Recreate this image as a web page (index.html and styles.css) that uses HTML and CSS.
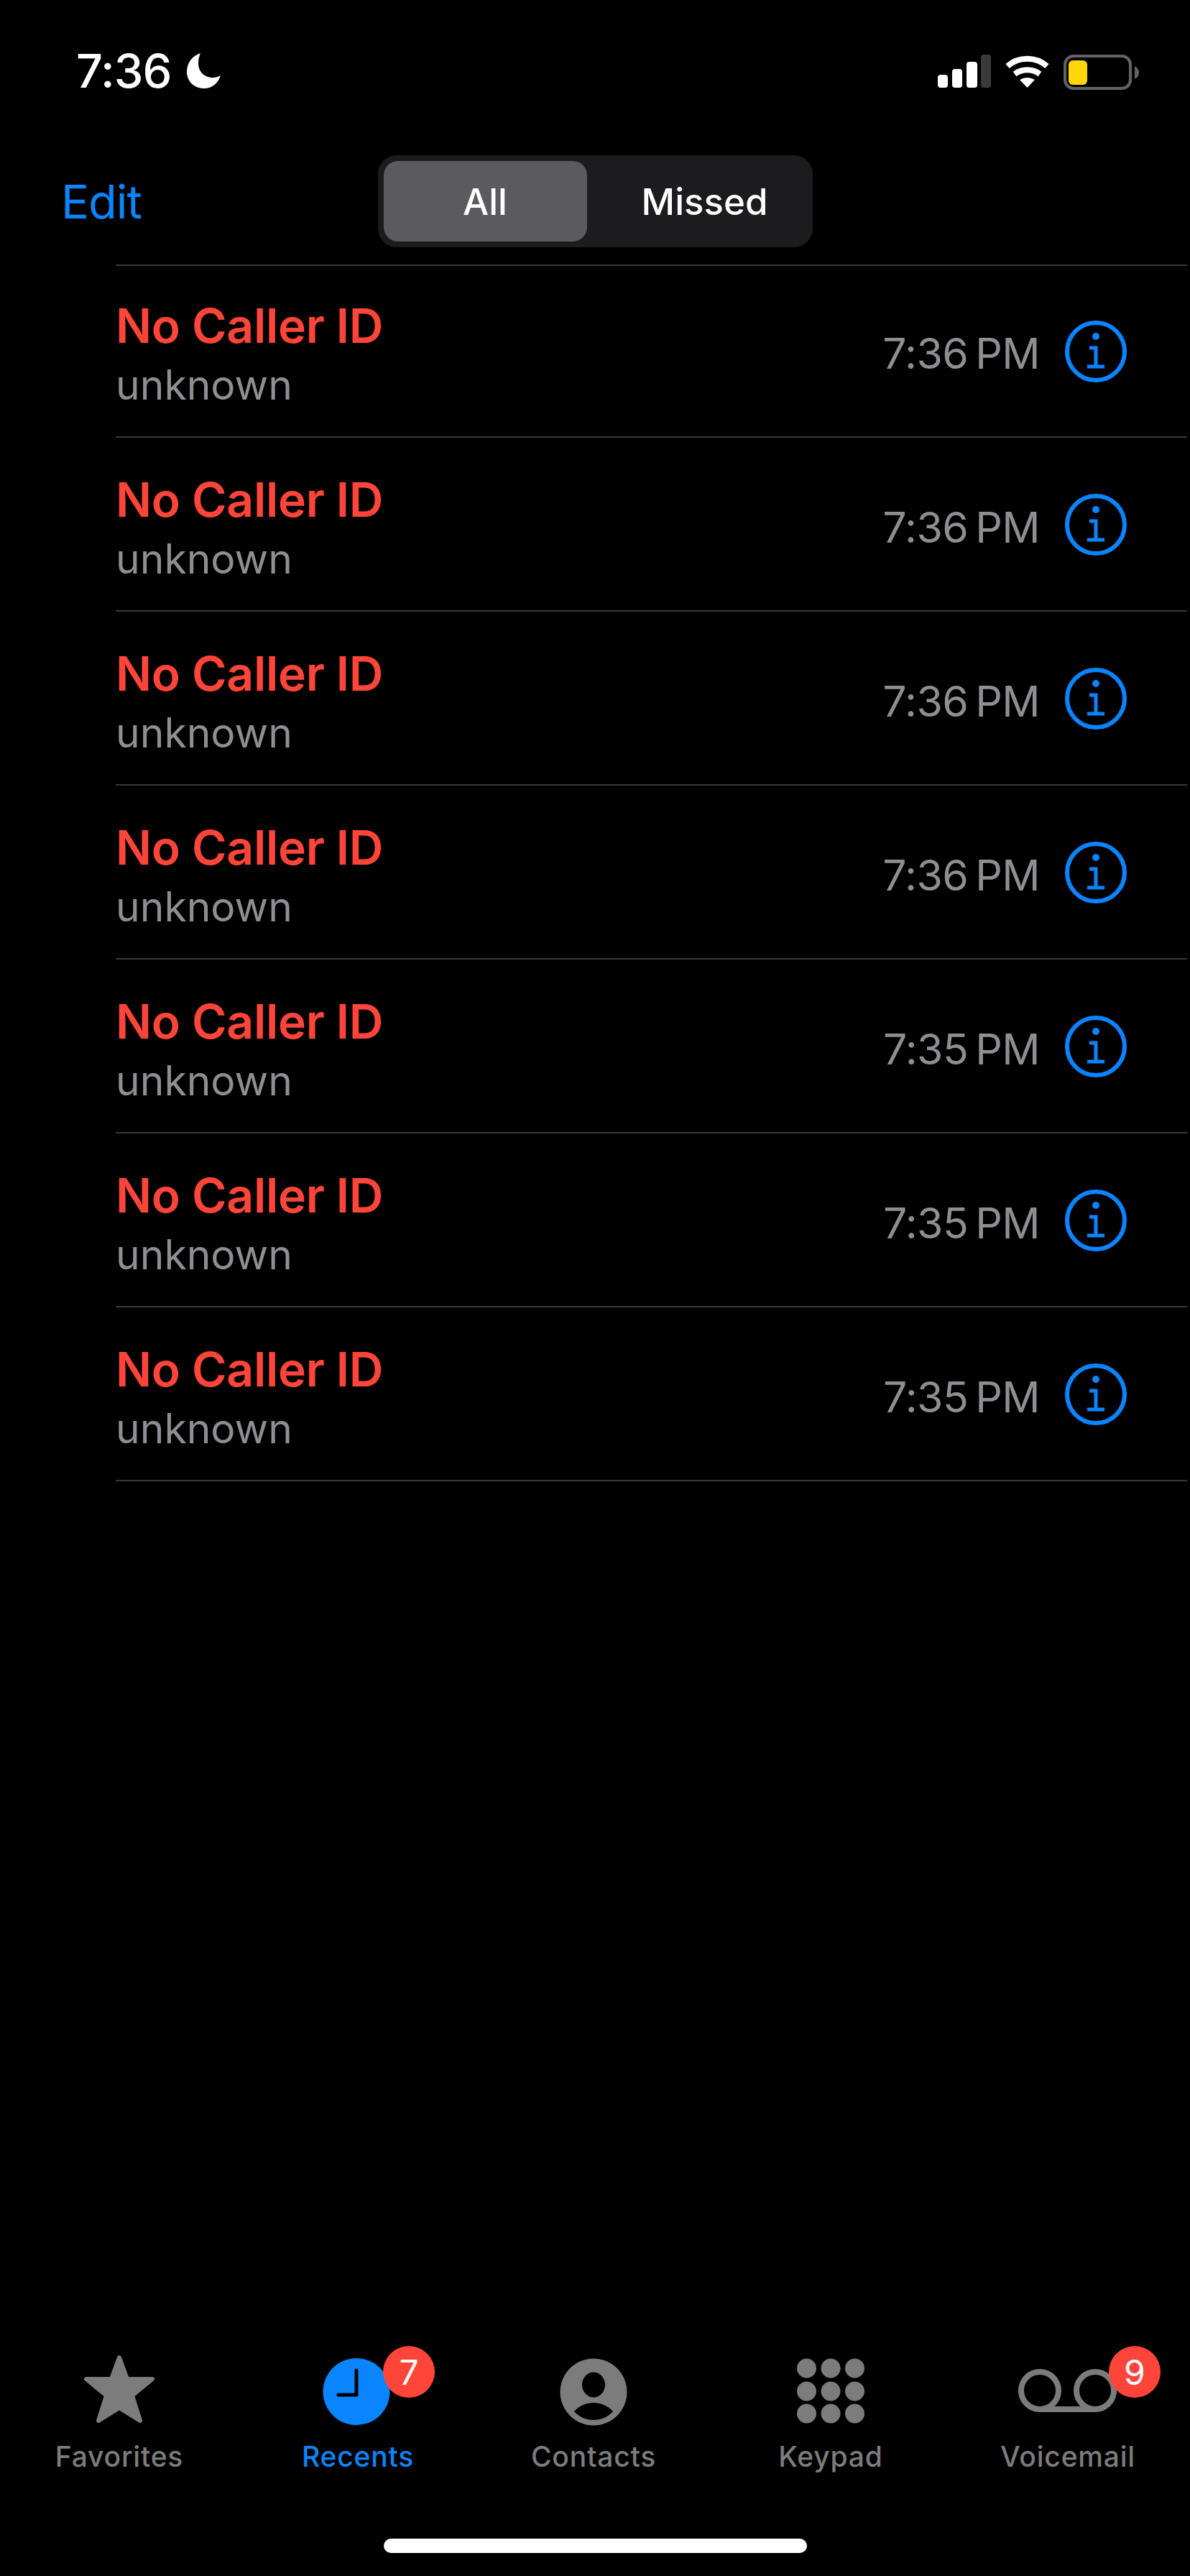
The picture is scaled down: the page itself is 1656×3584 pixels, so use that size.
FILE: index.html
```html
<!DOCTYPE html>
<html lang="en">
<head>
    <meta charset="UTF-8">
    <meta name="viewport" content="width=device-width, initial-scale=1.0">
    <title>Recents</title>
    <link rel="stylesheet" href="styles.css">
</head>
<body>
    <svg class="defs" width="0" height="0">
        <symbol id="info" viewBox="0 0 86 86">
            <circle cx="43" cy="43" r="40" fill="none" stroke="#0a84ff" stroke-width="6"/>
            <circle cx="43" cy="22" r="5" fill="#0a84ff"/>
            <path d="M34 38H43V64M31 64H55" fill="none" stroke="#0a84ff" stroke-width="5"/>
        </symbol>
    </svg>

    <div class="phone">
        <!-- status bar -->
        <div class="status">
            <div class="clock-group">
                <span class="clock">7:36</span>
                <svg class="moon" width="48" height="50" viewBox="0 0 48 50">
                    <path d="M19 0C7 4 0 14 0 26C0 39 10 49 24 49C34 49 43 43 47 31C44 33 40 34 36 34C24 34 16 25 16 14C16 9 17 4 19 0Z" fill="#fff"/>
                </svg>
            </div>
            <div class="status-icons">
                <svg width="74" height="47" viewBox="0 0 74 47">
                    <rect x="0" y="28" width="14" height="18" rx="4" fill="#fff"/>
                    <rect x="20" y="20" width="14" height="26" rx="4" fill="#fff"/>
                    <rect x="40" y="10" width="15" height="36" rx="4" fill="#fff"/>
                    <rect x="60" y="0" width="14" height="46" rx="4" fill="#3a3a3c"/>
                </svg>
                <svg width="63" height="47" viewBox="0 0 63 47">
                    <path d="M4 16A42 42 0 0 1 59 16" fill="none" stroke="#fff" stroke-width="8"/>
                    <path d="M14 27A30 30 0 0 1 49 27" fill="none" stroke="#fff" stroke-width="8"/>
                    <path d="M31.500 46L21 35Q31.500 29 42 35Z" fill="#fff"/>
                </svg>
                <svg width="106" height="50" viewBox="0 0 106 50">
                    <rect x="2" y="2" width="91" height="45" rx="12" fill="none" stroke="#636366" stroke-width="4"/>
                    <rect x="7" y="8" width="26" height="34" rx="6" fill="#ffd60a"/>
                    <path d="M99 16C103 18 105 21 105 25C105 29 103 32 99 34Z" fill="#636366"/>
                </svg>
            </div>
        </div>

        <!-- nav -->
        <div class="header">
            <a class="edit">Edit</a>
            <div class="segment">
                <div class="segment-on">All</div>
                <div class="segment-off">Missed</div>
            </div>
        </div>

        <!-- call list -->
        <div class="calls">
            <div class="call">
                <div class="who"><div class="name">No Caller ID</div><div class="sub">unknown</div></div>
                <div class="when">7:36 PM</div>
                <svg class="info" width="86" height="86"><use href="#info"/></svg>
            </div>
            <div class="call">
                <div class="who"><div class="name">No Caller ID</div><div class="sub">unknown</div></div>
                <div class="when">7:36 PM</div>
                <svg class="info" width="86" height="86"><use href="#info"/></svg>
            </div>
            <div class="call">
                <div class="who"><div class="name">No Caller ID</div><div class="sub">unknown</div></div>
                <div class="when">7:36 PM</div>
                <svg class="info" width="86" height="86"><use href="#info"/></svg>
            </div>
            <div class="call">
                <div class="who"><div class="name">No Caller ID</div><div class="sub">unknown</div></div>
                <div class="when">7:36 PM</div>
                <svg class="info" width="86" height="86"><use href="#info"/></svg>
            </div>
            <div class="call">
                <div class="who"><div class="name">No Caller ID</div><div class="sub">unknown</div></div>
                <div class="when">7:35 PM</div>
                <svg class="info" width="86" height="86"><use href="#info"/></svg>
            </div>
            <div class="call">
                <div class="who"><div class="name">No Caller ID</div><div class="sub">unknown</div></div>
                <div class="when">7:35 PM</div>
                <svg class="info" width="86" height="86"><use href="#info"/></svg>
            </div>
            <div class="call">
                <div class="who"><div class="name">No Caller ID</div><div class="sub">unknown</div></div>
                <div class="when">7:35 PM</div>
                <svg class="info" width="86" height="86"><use href="#info"/></svg>
            </div>
        </div>

        <!-- tab bar -->
        <div class="tabs">
            <div class="tab">
                <svg width="100" height="100" viewBox="0 0 100 100">
                    <polygon points="50,5 61,35 96,35 68,58 79,93 50,75 21,93 32,58 4,35 39,35" fill="#7c7c7c" stroke="#7c7c7c" stroke-width="6" stroke-linejoin="round"/>
                </svg>
                <div class="tab-label">Favorites</div>
            </div>
            <div class="tab tab-on">
                <svg width="100" height="100" viewBox="0 0 100 100">
                    <circle cx="50" cy="52.500" r="46.500" fill="#0a84ff"/>
                    <path d="M50 23V57H25" fill="none" stroke="#000" stroke-width="5" stroke-linecap="round" stroke-linejoin="round"/>
                </svg>
                <div class="tab-label">Recents</div>
                <span class="badge badge-recents">7</span>
            </div>
            <div class="tab">
                <svg width="100" height="100" viewBox="0 0 100 100">
                    <circle cx="50" cy="53" r="46.500" fill="#7c7c7c"/>
                    <ellipse cx="50" cy="43" rx="16" ry="17.500" fill="#000"/>
                    <path d="M23 80C30 72 40 68 50 68C60 68 70 72 77 80C70 88 60 92 50 92C40 92 30 88 23 80Z" fill="#000"/>
                </svg>
                <div class="tab-label">Contacts</div>
            </div>
            <div class="tab">
                <svg width="100" height="100" viewBox="0 0 100 100">
                    <g fill="#7c7c7c">
                        <circle cx="16.500" cy="20" r="13.500"/><circle cx="50" cy="20" r="13.500"/><circle cx="83.500" cy="20" r="13.500"/>
                        <circle cx="16.500" cy="52" r="13.500"/><circle cx="50" cy="52" r="13.500"/><circle cx="83.500" cy="52" r="13.500"/>
                        <circle cx="16.500" cy="83" r="13.500"/><circle cx="50" cy="83" r="13.500"/><circle cx="83.500" cy="83" r="13.500"/>
                    </g>
                </svg>
                <div class="tab-label">Keypad</div>
            </div>
            <div class="tab">
                <svg width="140" height="100" viewBox="0 0 140 100">
                    <g fill="none" stroke="#7c7c7c" stroke-width="8">
                        <circle cx="31" cy="51" r="26"/>
                        <circle cx="108" cy="51" r="26"/>
                        <path d="M31 77H108"/>
                    </g>
                </svg>
                <div class="tab-label">Voicemail</div>
                <span class="badge badge-voicemail">9</span>
            </div>
        </div>

        <div class="home-bar"></div>
    </div>
</body>
</html>
```

FILE: styles.css
```css
body {
    margin: 0;
    background-color: #000;
    font-family: Inter, "Liberation Sans", sans-serif;
}
.defs {
    display: block;
    height: 0;
}
.phone {
    display: flex;
    flex-direction: column;
    width: 1656px;
    height: 3584px;
    overflow: hidden;
}

.status {
    display: flex;
    justify-content: space-between;
    align-items: flex-start;
    height: 200px;
    padding: 74px 70px 0 106px;
    box-sizing: border-box;
}
.clock-group {
    display: flex;
    align-items: center;
    gap: 22px;
    height: 50px;
}
.clock {
    font-size: 65px;
    font-weight: 500;
    letter-spacing: -1px;
    line-height: 50px;
    color: #fff;
}
.moon {
    flex: none;
}
.status-icons {
    display: flex;
    align-items: flex-start;
    gap: 19px;
    padding-top: 2px;
}

.header {
    display: grid;
    grid-template-columns: 1fr auto 1fr;
    align-items: center;
    height: 168px;
    padding: 16px 0 24px;
    box-sizing: border-box;
}
.edit {
    margin-left: 85px;
    font-size: 65px;
    color: #0a84ff;
    letter-spacing: -1px;
}
.segment {
    display: flex;
    width: 605px;
    height: 128px;
    padding: 8px;
    box-sizing: border-box;
    background: #1c1c1e;
    border-radius: 26px;
    font-size: 51px;
    font-weight: 450;
    color: #fff;
}
.segment-on, .segment-off {
    display: flex;
    align-items: center;
    justify-content: center;
}
.segment-on {
    width: 283px;
    background: #5a5a5f;
    border-radius: 20px;
}
.segment-off {
    flex: 1;
    padding-left: 22px;
}

.calls {
    flex: 1;
    margin: 0 4px 0 161px;
    border-top: 2px solid #38383a;
}
.call {
    display: flex;
    align-items: center;
    height: 242px;
    padding: 2px 84px 0 0;
    box-sizing: border-box;
    border-bottom: 2px solid #38383a;
}
.call:first-child {
    height: 239px;
    padding-top: 0;
}
.who {
    flex: 1;
    padding-top: 12px;
}
.name {
    font-size: 66px;
    font-weight: 600;
    line-height: 80px;
    color: #ff453a;
    letter-spacing: -0.3px;
}
.sub {
    margin-top: 3px;
    font-size: 57px;
    line-height: 80px;
    color: #8e8e93;
}
.when {
    margin-right: 35px;
    padding-top: 6px;
    font-size: 59px;
    color: #8e8e93;
    letter-spacing: -0.6px;
    word-spacing: -6px;
}
.info {
    flex: none;
}

.tabs {
    display: grid;
    grid-template-columns: repeat(5, 330px);
    padding-left: 1px;
}
.tab {
    position: relative;
    display: flex;
    flex-direction: column;
    align-items: center;
}
.tab-label {
    margin-top: 18px;
    font-size: 39px;
    font-weight: 500;
    line-height: 50px;
    letter-spacing: 0.8px;
    color: #7c7c7c;
}
.tab-on .tab-label {
    margin-left: 4px;
    color: #0a84ff;
}
.badge {
    position: absolute;
    top: -11px;
    display: flex;
    align-items: center;
    justify-content: center;
    width: 72px;
    height: 72px;
    border-radius: 50%;
    background: #ff453a;
    font-size: 48px;
    color: #fff;
}
.badge-recents {
    left: calc(50% + 37px);
}
.badge-voicemail {
    left: calc(50% + 57px);
}

.home-bar {
    align-self: center;
    width: 589px;
    height: 20px;
    margin: 89px 0 32px;
    border-radius: 10px;
    background: #fff;
}
```
